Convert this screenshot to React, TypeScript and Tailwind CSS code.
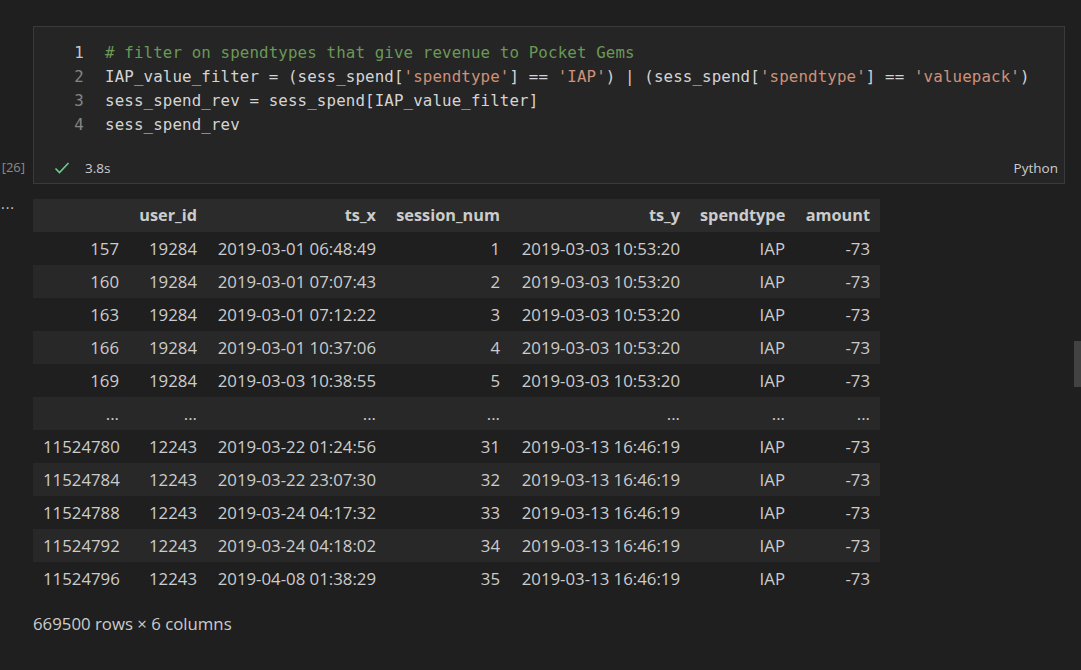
import React from "react";

const S = ({ children }: { children: React.ReactNode }) => (
  <span className="text-[#ce9178]">{children}</span>
);

type Row = (string | number)[];

const rows: Row[] = [
  [157, 19284, "2019-03-01 06:48:49", 1, "2019-03-03 10:53:20", "IAP", -73],
  [160, 19284, "2019-03-01 07:07:43", 2, "2019-03-03 10:53:20", "IAP", -73],
  [163, 19284, "2019-03-01 07:12:22", 3, "2019-03-03 10:53:20", "IAP", -73],
  [166, 19284, "2019-03-01 10:37:06", 4, "2019-03-03 10:53:20", "IAP", -73],
  [169, 19284, "2019-03-03 10:38:55", 5, "2019-03-03 10:53:20", "IAP", -73],
  ["...", "...", "...", "...", "...", "...", "..."],
  [11524780, 12243, "2019-03-22 01:24:56", 31, "2019-03-13 16:46:19", "IAP", -73],
  [11524784, 12243, "2019-03-22 23:07:30", 32, "2019-03-13 16:46:19", "IAP", -73],
  [11524788, 12243, "2019-03-24 04:17:32", 33, "2019-03-13 16:46:19", "IAP", -73],
  [11524792, 12243, "2019-03-24 04:18:02", 34, "2019-03-13 16:46:19", "IAP", -73],
  [11524796, 12243, "2019-04-08 01:38:29", 35, "2019-03-13 16:46:19", "IAP", -73],
];

const headers = ["", "user_id", "ts_x", "session_num", "ts_y", "spendtype", "amount"];
const widths = [96, 78, 179, 124, 180, 105, 85];

export default function App() {
  const mono = { fontFamily: '"DejaVu Sans Mono", "Liberation Mono", monospace' };
  const ui = { fontFamily: '"Open Sans", "Noto Sans", sans-serif' };
  return (
    <div className="relative w-full h-[670px] bg-[#1f1f1f] overflow-hidden text-[#cccccc]" style={ui}>
      <div className="pt-[26px] flex">
        {/* gutter */}
        <div className="w-[33px] shrink-0 flex flex-col justify-end pb-[5px]">
          <div className="h-[22px] w-[25px] flex items-center justify-end text-[13px] text-[#8b8b8b] whitespace-nowrap">
            [26]
          </div>
        </div>
        {/* cell */}
        <div className="w-[1032px] border border-[#3a3a3d] bg-[#252526]">
          <div className="pt-[14px] pb-[16px] text-[15.8px] leading-[24px] tracking-[0.12px]" style={mono}>
            {[
              <span className="text-[#6a9955]"># filter on spendtypes that give revenue to Pocket Gems</span>,
              <span className="text-[#d4d4d4]">
                IAP_value_filter = (sess_spend[<S>'spendtype'</S>] == <S>'IAP'</S>) | (sess_spend[<S>'spendtype'</S>] == <S>'valuepack'</S>)
              </span>,
              <span className="text-[#d4d4d4]">sess_spend_rev = sess_spend[IAP_value_filter]</span>,
              <span className="text-[#d4d4d4]">sess_spend_rev</span>,
            ].map((line, i) => (
              <div key={i} className="flex h-[24px] whitespace-pre">
                <div className={`w-[50px] text-right ${i === 0 ? "text-[#c6c6c6]" : "text-[#858585]"}`}>{i + 1}</div>
                <div className="pl-[21px]">{line}</div>
              </div>
            ))}
          </div>
          <div className="h-[30px] flex items-center justify-between pl-[20px] pr-[6px] text-[13.5px] text-[#cccccc]">
            <div className="flex items-center gap-[15px]">
              <svg width="16" height="14" viewBox="0 0 16 14" fill="none">
                <path d="M1.5 7.5 L5.5 11.5 L14.5 2" stroke="#73c991" strokeWidth="1.6" />
              </svg>
              <span>3.8s</span>
            </div>
            <span>Python</span>
          </div>
        </div>
      </div>

      {/* output */}
      <div className="flex mt-[15px]">
        <div className="w-[33px] shrink-0 text-[14px] leading-[10px] text-[#cccccc] pl-[1px] tracking-[1px]">...</div>
        <div>
          <table className="table-fixed border-collapse w-[847px] text-[16.8px]">
            <colgroup>
              {widths.map((w, i) => (
                <col key={i} style={{ width: w }} />
              ))}
            </colgroup>
            <thead>
              <tr className="bg-[#2b2b2b] h-[33px]">
                {headers.map((h, i) => (
                  <th key={i} className="px-[10px] text-right font-bold text-[16.3px] text-[#cccccc] whitespace-nowrap p-0">
                    {h}
                  </th>
                ))}
              </tr>
            </thead>
            <tbody>
              {rows.map((r, ri) => (
                <tr key={ri} className={`h-[33px] ${ri % 2 === 1 ? "bg-[#282828]" : "bg-[#1f1f1f]"}`}>
                  {r.map((c, ci) => (
                    <td key={ci} className="px-[10px] text-right whitespace-nowrap p-0">
                      {c}
                    </td>
                  ))}
                </tr>
              ))}
            </tbody>
          </table>
          <div className="mt-[19px] leading-[20px] text-[16.8px]">669500 rows × 6 columns</div>
        </div>
      </div>

      {/* scrollbar */}
      <div className="absolute right-0 top-[341px] w-[7px] h-[46px] bg-[#424242]" />
    </div>
  );
}
